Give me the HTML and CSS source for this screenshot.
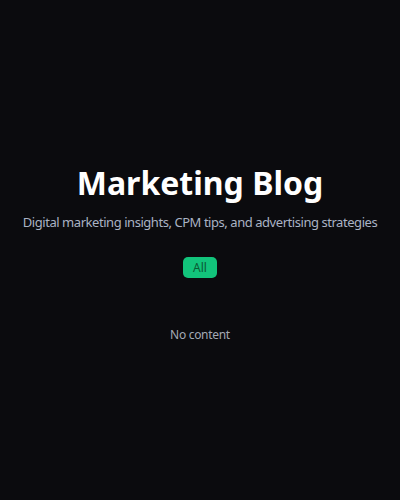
FILE: index.html
```html
<!DOCTYPE html>
<html>
<head>
<meta charset="utf-8">
<link rel="stylesheet" href="styles.css">
</head>
<body>
<main class="page">
  <header class="hero">
    <h1 class="title">Marketing Blog</h1>
    <p class="subtitle">Digital marketing insights, CPM tips, and advertising strategies</p>
  </header>
  <nav class="filters">
    <button class="chip active">All</button>
  </nav>
  <p class="empty">No content</p>
</main>
</body>
</html>
```
FILE: styles.css
```css
html, body {
  margin: 0;
  padding: 0;
  background: #0b0b0e;
  height: 100%;
}
body {
  font-family: "Noto Sans", "Open Sans", sans-serif;
  color: #fff;
}
.page {
  display: flex;
  flex-direction: column;
  align-items: center;
  padding-top: 160px;
}
.hero {
  text-align: center;
}
.title {
  margin: 0;
  font-size: 32px;
  font-weight: 700;
  line-height: 46px;
}
.subtitle {
  margin: 6px 0 0;
  font-size: 13px;
  line-height: 20px;
  letter-spacing: -0.45px;
  white-space: nowrap;
  color: #aab3c4;
}
.filters {
  margin-top: 25px;
  display: flex;
  gap: 8px;
}
.chip {
  font-family: inherit;
  font-size: 12px;
  line-height: 15px;
  padding: 3px 10px;
  border: none;
  border-radius: 5px;
  background: #12c47b;
  color: #0b5a33;
}
.empty {
  margin: 48px 0 0;
  font-size: 12px;
  line-height: 18px;
  letter-spacing: -0.3px;
  color: #a3a9b5;
}
```
